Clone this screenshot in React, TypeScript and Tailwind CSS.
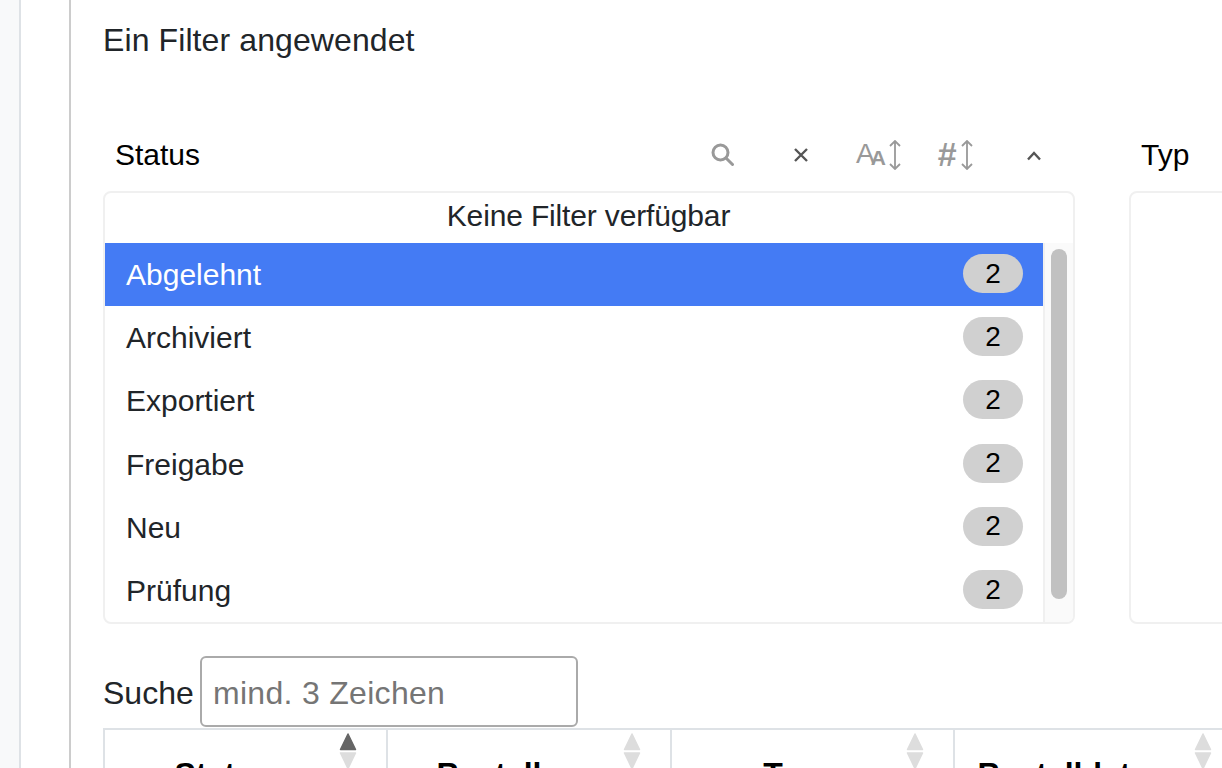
import React from 'react';

const items = ['Abgelehnt', 'Archiviert', 'Exportiert', 'Freigabe', 'Neu', 'Prüfung'];
const columns = ['Status', 'Bestellnr', 'Typ', 'Bestelldatum'];
const colWidths = ['w-[283px] pr-[44px]', 'w-[284px] pr-[48px]', 'w-[283px] pr-[44px]', 'w-[288px] pr-[40px]'];

const SortArrows = ({ active }: { active?: boolean }) => (
  <svg width="18" height="37" viewBox="0 0 18 37" className="absolute top-[3px] right-[29px]">
    <path d="M9 1 L16.5 16.5 H1.5 Z" fill={active ? '#666666' : '#dddddd'} stroke={active ? '#666666' : '#dddddd'} strokeWidth="1.5" strokeLinejoin="round" />
    <path d="M1.5 20 H16.5 L9 35.5 Z" fill="#dddddd" stroke="#dddddd" strokeWidth="1.5" strokeLinejoin="round" />
  </svg>
);

const UpDown = () => (
  <svg width="14" height="30" viewBox="0 0 14 30" fill="none" stroke="#999999" strokeWidth="1.8">
    <path d="M7 1 V29 M2 6 L7 1 L12 6 M2 24 L7 29 L12 24" />
  </svg>
);

const FilterHeader = () => (
  <div className="h-[56px] mb-[8px] flex items-center pl-[12px]">
    <span className="text-[30px] text-black mb-[2px]">Status</span>
    <div className="ml-auto flex items-center h-full w-[370px]">
      <svg width="23" height="23" viewBox="0 0 23 23" fill="none" stroke="#999999" strokeWidth="3" className="ml-[6px] mb-[2px]">
        <circle cx="9.5" cy="9.5" r="7.5" />
        <path d="M15 15 L21.5 21.5" strokeLinecap="round" />
      </svg>
      <svg width="14" height="14" viewBox="0 0 14 14" fill="none" stroke="#555555" strokeWidth="2.4" className="ml-[60px]">
        <path d="M1 1 L13 13 M13 1 L1 13" />
      </svg>
      <div className="ml-[48px] flex items-center text-[#999999] leading-none">
        <span className="text-[28px] mb-[3px]">A</span>
        <span className="text-[21px] font-bold mt-[5px] -ml-[4px]">A</span>
        <span className="ml-[2px]"><UpDown /></span>
      </div>
      <div className="ml-[36px] flex items-center text-[#999999] leading-none">
        <span className="text-[34px] font-bold mb-[2px]">#</span>
        <span className="ml-[3px]"><UpDown /></span>
      </div>
      <svg width="16" height="10" viewBox="0 0 16 10" fill="none" stroke="#555555" strokeWidth="2.4" className="ml-[52px] mt-[2px]">
        <path d="M2 8.5 L8 2 L14 8.5" />
      </svg>
    </div>
  </div>
);

export default function App() {
  return (
    <div className="h-[768px] overflow-hidden flex bg-white text-[#212529]" style={{ fontFamily: '"Liberation Sans", Arial, sans-serif' }}>
      <div className="w-[21px] shrink-0 bg-[#f8f9fa] border-r-2 border-[#dee2e6]" />
      <div className="w-[50px] shrink-0 border-r-2 border-[#cccccc]" />
      <div className="flex-1 min-w-0 pl-[32px]">
        <div className="h-[127px] pt-[20px] text-[32px] leading-[40px] tracking-[.1px]">Ein Filter angewendet</div>

        <div className="flex gap-[54px] w-[1400px]">
          <div className="w-[972px] shrink-0">
            <FilterHeader />
            <div className="h-[433px] border-2 border-[#f0f0f0] rounded-[8px] overflow-hidden flex flex-col">
              <div className="h-[50px] shrink-0 text-center text-[30px] tracking-[-.15px] leading-[45px] pr-[1px]">Keine Filter verfügbar</div>
              <div className="flex-1 flex min-h-0">
                <div className="flex-1 min-w-0">
                  {items.map((item, i) => (
                    <div key={item} className={`h-[63.2px] flex items-center justify-between pl-[21px] pr-[20px] text-[30px] ${i === 0 ? 'bg-[#447bf4] text-white' : ''}`}>
                      <span>{item}</span>
                      <span className="w-[60px] h-[39px] mb-[2px] rounded-full bg-[#d0d0d0] text-black text-[28px] flex items-center justify-center">2</span>
                    </div>
                  ))}
                </div>
                <div className="w-[30px] shrink-0 bg-[#fafafa] border-l-2 border-[#f0f0f0] pl-[6px] pt-[6px]">
                  <div className="w-[16px] h-[350px] rounded-full bg-[#c1c1c1]" />
                </div>
              </div>
            </div>
          </div>

          <div className="w-[300px] shrink-0">
            <div className="h-[56px] mb-[8px] pb-[2px] flex items-center pl-[12px] text-[30px] text-black">Typ</div>
            <div className="h-[433px] border-2 border-[#f0f0f0] rounded-[8px]" />
          </div>
        </div>

        <div className="mt-[32px] flex items-start h-[72px]">
          <label className="w-[97px] text-[32px] leading-[74px] shrink-0">Suche</label>
          <input placeholder="mind. 3 Zeichen" className="w-[378px] h-[71px] border-2 border-[#aaaaaa] rounded-[6px] px-[11px] pt-[4px] text-[32px] tracking-[.3px] placeholder:text-[#757575] outline-none" />
        </div>

        <table className="table-fixed border-collapse w-[1138px]">
          <thead>
            <tr>
              {columns.map((c, i) => (
                <th key={c} className={`relative h-[90px] border-2 border-[#dee2e6] text-[32px] font-bold text-black text-center ${colWidths[i]}`}>
                  {c}
                  <SortArrows active={i === 0} />
                </th>
              ))}
            </tr>
          </thead>
        </table>
      </div>
    </div>
  );
}
